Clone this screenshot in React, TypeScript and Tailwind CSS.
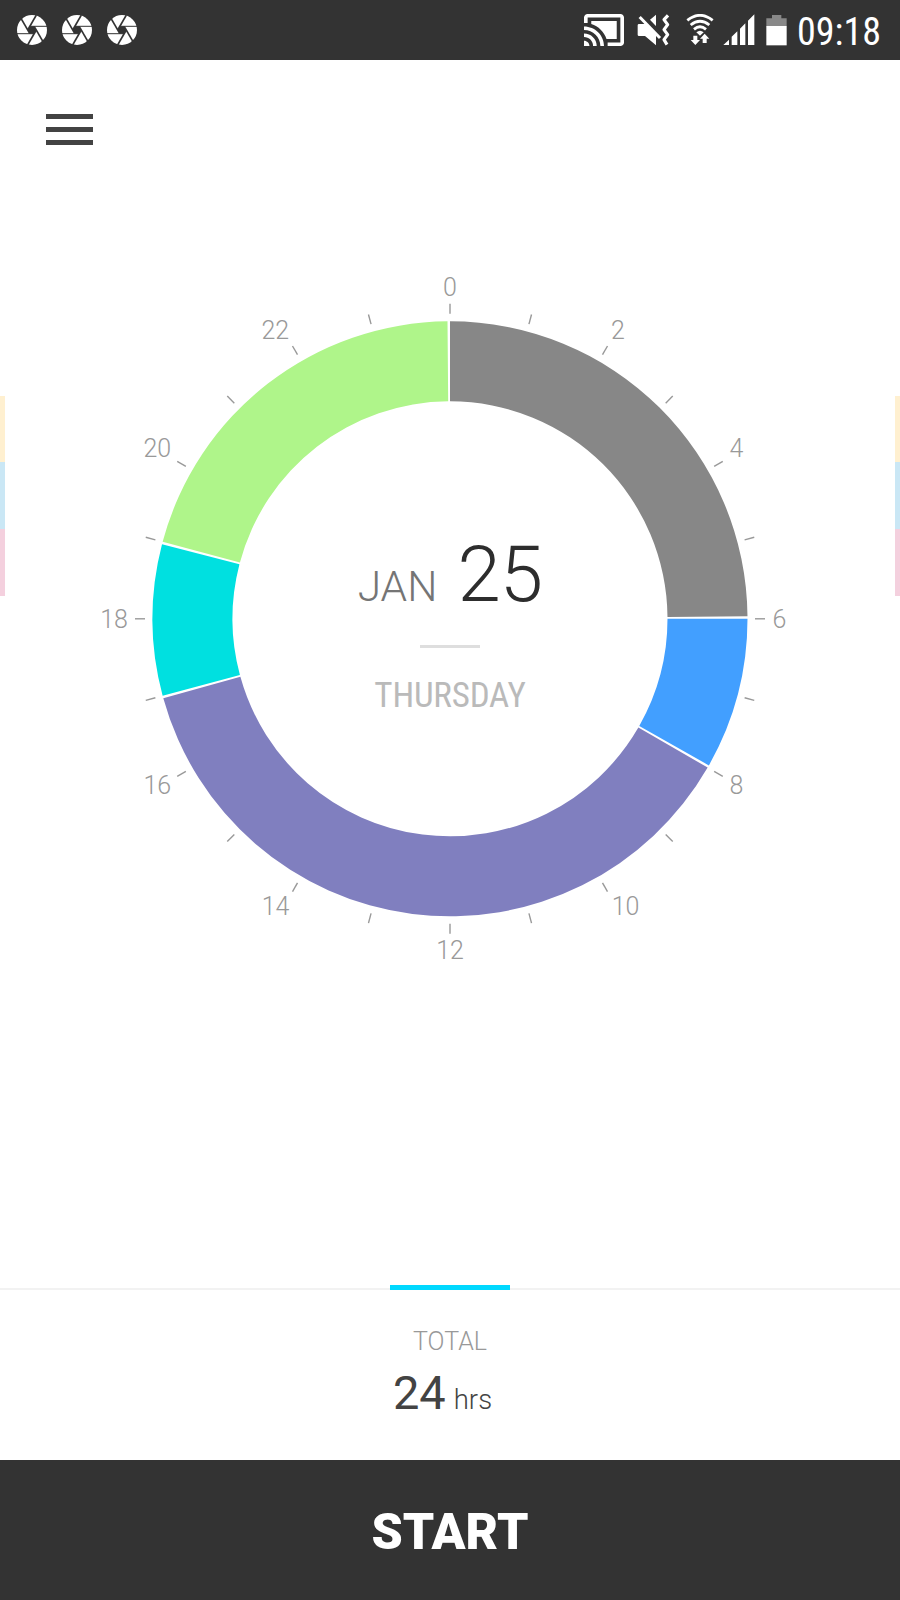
const CENTER = 350
const OUTER_RADIUS = 297.5
const INNER_RADIUS = 217.5
const GAP_DEGREES = 0.48

const segments = [
    { from: 0, to: 6, color: "#878787" },
    { from: 6, to: 8, color: "#429fff" },
    { from: 8, to: 17, color: "#807fbf" },
    { from: 17, to: 19, color: "#00e0e0" },
    { from: 19, to: 24, color: "#aff58a" },
]

const hourLabels = [
    { hour: 0, x: 350, y: 27 },
    { hour: 2, x: 518, y: 70 },
    { hour: 4, x: 636.5, y: 188 },
    { hour: 6, x: 679.5, y: 359 },
    { hour: 8, x: 636.5, y: 525 },
    { hour: 10, x: 525.5, y: 646 },
    { hour: 12, x: 350, y: 690 },
    { hour: 14, x: 175.5, y: 645.5 },
    { hour: 16, x: 57.3, y: 525 },
    { hour: 18, x: 14, y: 359 },
    { hour: 20, x: 57.3, y: 188 },
    { hour: 22, x: 175.3, y: 70 },
]

const point = (degrees: number, radius: number) => {
    const rad = (degrees * Math.PI) / 180
    return `${CENTER + radius * Math.sin(rad)} ${CENTER - 0.2 - radius * Math.cos(rad)}`
}

const segmentPath = (from: number, to: number) => {
    const start = from * 15
    const end = to * 15 - GAP_DEGREES
    const large = end - start > 180 ? 1 : 0
    return `M${point(start, OUTER_RADIUS)}
            A${OUTER_RADIUS} ${OUTER_RADIUS} 0 ${large} 1 ${point(end, OUTER_RADIUS)}
            L${point(end, INNER_RADIUS)}
            A${INNER_RADIUS} ${INNER_RADIUS} 0 ${large} 0 ${point(start, INNER_RADIUS)}Z`
}

function ApertureIcon() {
    return (
        <svg width="30" height="30" viewBox="-15 -15 30 30">
            <circle r="15" fill="#fff" />
            <path d="M4.2 0L2.1 3.7H-2.1L-4.2 0L-2.1 -3.7H2.1Z" fill="#333" />
            {[0, 60, 120, 180, 240, 300].map((angle) => (
                <path key={angle} d="M-2.1 -3.7H15" stroke="#333" fill="none"
                      strokeWidth={angle % 180 === 0 ? 1 : 1.7} transform={`rotate(${angle})`} />
            ))}
        </svg>
    )
}

function CastIcon() {
    return (
        <svg className="ml-auto" width="40" height="32" viewBox="1 3 22 18" preserveAspectRatio="none" fill="#fff">
            <path d="M1 18v3h3c0-1.66-1.34-3-3-3zm0-4v2c2.76 0 5 2.24 5 5h2c0-3.87-3.13-7-7-7zm18-7H5v1.63c3.96 1.28 7.09 4.41 8.37 8.37H19V7zM1 10v2c4.97 0 9 4.03 9 9h2c0-6.08-4.93-11-11-11zm20-7H3c-1.1 0-2 .9-2 2v3h2V5h18v14h-7v2h7c1.1 0 2-.9 2-2V5c0-1.1-.9-2-2-2z" />
        </svg>
    )
}

function MuteIcon() {
    return (
        <svg className="ml-[13px]" width="33" height="32" viewBox="200 42 99 96">
            <path d="M202 76q0-4 4-4H224L257 44V136L224 108H206q-4 0-4-4Z" fill="#fff" />
            <path d="M212 42L280 113" stroke="#333" strokeWidth="15" />
            <path d="M208 51L269 114" stroke="#fff" strokeWidth="9" />
            <path d="M293 46L281 59L292 74L281 89L292 104L281 119L290 134" stroke="#fff" strokeWidth="9.5" strokeLinejoin="round" fill="none" />
        </svg>
    )
}

function WifiIcon() {
    return (
        <svg className="ml-[16px]" width="28" height="32" viewBox="349 42 84 96" fill="none" stroke="#fff" strokeWidth="8.5">
            <path d="M353 61Q391 31 429 61" />
            <path d="M363 75Q391 52 419 75" />
            <path d="M373 88Q391 73 409 88" />
            <path d="M380 97Q391 88 402 97L391 107Z" fill="#fff" stroke="none" />
            <path d="M371 107H383V120H391L377 135L363 120H371Z" fill="#fff" stroke="none" />
            <path d="M399 129H411V116H419L405 101L391 116H399Z" fill="#fff" stroke="none" />
        </svg>
    )
}

function SignalIcon() {
    return (
        <svg className="ml-[9px]" width="32" height="32" viewBox="10 42 96 96" fill="#fff">
            <path d="M11 135L28 119V135Z M36 135V110L53 94V135Z M61 135V86L77 70V135Z M85 135V62L104 43V135Z" />
        </svg>
    )
}

function BatteryIcon() {
    return (
        <svg className="ml-[11px]" width="21" height="32" viewBox="139 42 63 96">
            <path d="M157 45H185V55H201V79H140V55H157Z" fill="#888" />
            <path d="M140 78H201V136H140Z" fill="#fff" />
        </svg>
    )
}

function StatusBar() {
    return (
        <header className="flex h-[60px] items-center bg-[#333] pl-[17px] pr-[20px]">
            <div className="flex gap-[15px]">
                <ApertureIcon />
                <ApertureIcon />
                <ApertureIcon />
            </div>
            <CastIcon />
            <MuteIcon />
            <WifiIcon />
            <SignalIcon />
            <BatteryIcon />
            <span className="ml-[10px] w-[83px] pt-[3px] whitespace-nowrap font-['Roboto_Condensed',Roboto,sans-serif] text-[38px] leading-none text-white font-stretch-condensed">09:18</span>
        </header>
    )
}

function PeekStrip() {
    return (
        <div className="mt-[127px] w-[5px] self-start">
            <div className="h-[66px] bg-[#fff0d0]" />
            <div className="h-[67px] bg-[#cae7f5]" />
            <div className="h-[67px] bg-[#f4d0de]" />
        </div>
    )
}

function DayChart() {
    return (
        <div className="grid">
            <svg className="col-start-1 row-start-1" width="700" height="710" viewBox="0 0 700 710">
                {segments.map((segment) => (
                    <path key={segment.from} d={segmentPath(segment.from, segment.to)} fill={segment.color} />
                ))}
                {Array.from({ length: 24 }, (_, hour) => (
                    <path key={hour} d={`M${point(hour * 15, 305)}L${point(hour * 15, 315)}`} stroke="#999" strokeWidth="1.4" />
                ))}
                {hourLabels.map((label) => (
                    <text key={label.hour} x={label.x} y={label.y} textAnchor="middle" fill="#999" className="text-[25px] font-light">
                        {label.hour}
                    </text>
                ))}
            </svg>
            <div className="col-start-1 row-start-1 flex flex-col items-center pt-[259px]">
                <div className="flex items-baseline gap-[20px] leading-[94px] font-light">
                    <span className="text-[42.5px] text-[#757575]">JAN</span>
                    <span className="text-[78px] tracking-[-0.8px] text-[#2d2d2d]">25</span>
                </div>
                <div className="mt-[11px] h-[3px] w-[60px] bg-[#dedede]" />
                <p className="mt-[27px] font-['Roboto_Condensed',Roboto,sans-serif] text-[35px] leading-[42px] tracking-[-0.2px] text-[#bababa] font-stretch-condensed">THURSDAY</p>
            </div>
        </div>
    )
}

export default function App() {
    return (
        <div className="flex h-[1600px] w-[900px] flex-col bg-white font-[Roboto,sans-serif]">
            <StatusBar />
            <button className="ml-[46px] mt-[54px] flex w-[47px] flex-col gap-[8px]">
                <span className="h-[5px] w-full bg-[#434343]" />
                <span className="h-[5px] w-full bg-[#434343]" />
                <span className="h-[5px] w-full bg-[#434343]" />
            </button>
            <main className="mt-[124px] flex justify-between">
                <PeekStrip />
                <DayChart />
                <PeekStrip />
            </main>
            <section className="mt-auto flex h-[175px] flex-col items-center">
                <div className="flex w-full items-end">
                    <div className="h-[2px] grow bg-[#f2f2f2]" />
                    <div className="h-[5px] w-[120px] bg-[#00d8ff]" />
                    <div className="h-[2px] grow bg-[#f2f2f2]" />
                </div>
                <p className="mt-[37px] text-[25px] leading-[30px] font-light text-[#999]">TOTAL</p>
                <div className="mr-[15px] mt-[8px] flex items-baseline gap-[8px] leading-[56px]">
                    <span className="text-[47px] text-[#434343]">24</span>
                    <span className="text-[27.5px] font-light text-[#434343]">hrs</span>
                </div>
            </section>
            <button className="h-[140px] bg-[#333] pt-[5px] text-[50px] font-black text-white">START</button>
        </div>
    )
}
